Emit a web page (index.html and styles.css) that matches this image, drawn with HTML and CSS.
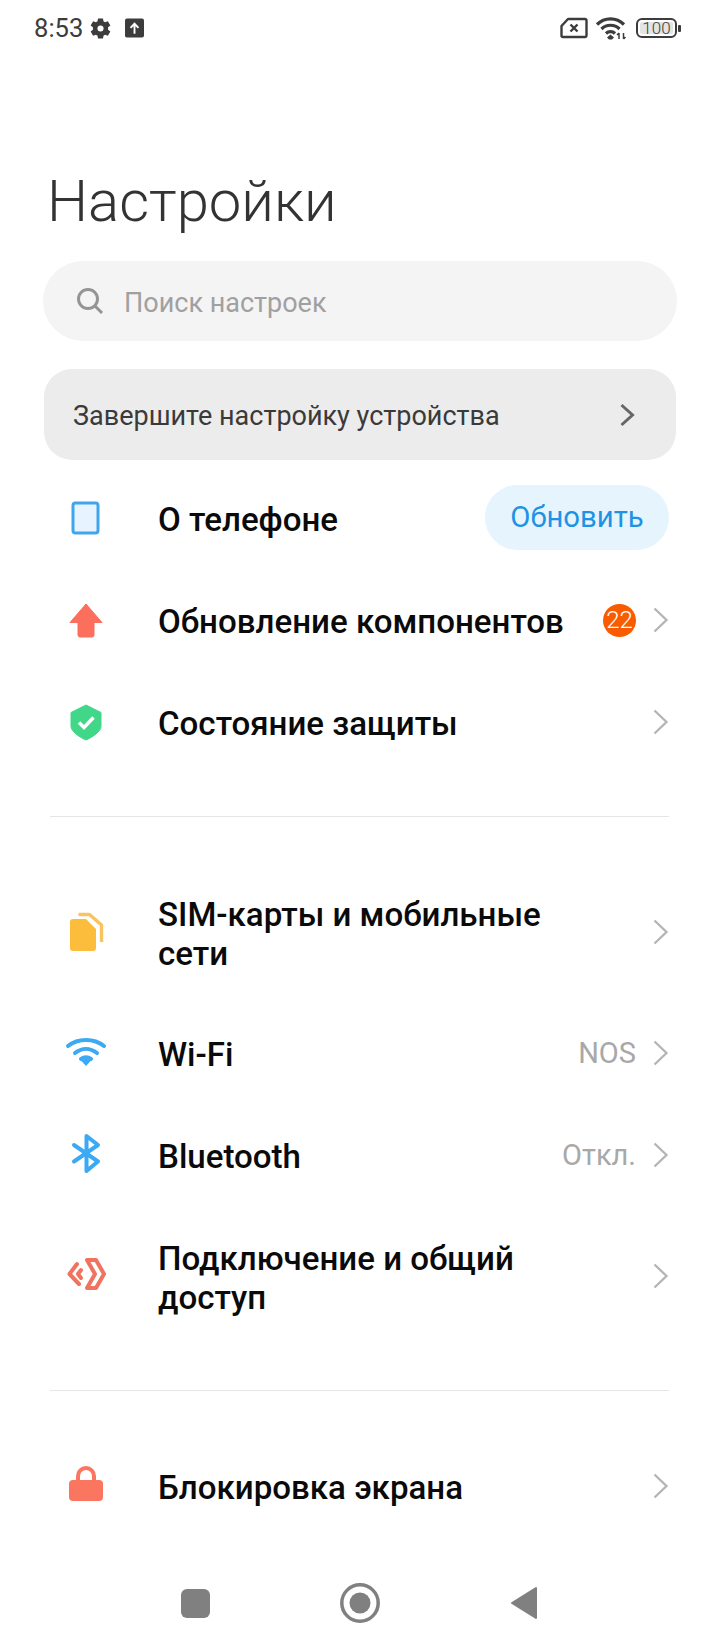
FILE: index.html
```html
<!DOCTYPE html>
<html lang="ru">
<head>
    <meta charset="UTF-8">
    <meta name="viewport" content="width=device-width, initial-scale=1.0">
    <title>Настройки</title>
    <link rel="stylesheet" href="styles.css">
</head>
<body>
    <div class="statusbar">
        <div class="status-left">
            <span class="clock">8:53</span>
            <svg class="gear" width="23" height="23" viewBox="0 0 24 24"><path fill="#3c3c3c" fill-rule="evenodd" d="M14.6 1.5l.5 3 1.7 1 2.9-1.1 2.6 4.5-2.4 1.9v2.4l2.4 1.9-2.6 4.5-2.9-1.1-1.7 1-.5 3H9.4l-.5-3-1.7-1-2.9 1.1-2.6-4.500 2.400-1.900V10.800L1.700 8.900l2.600-4.500 2.900 1.100 1.700-1 .5-3zM12 8.800a3.200 3.200 0 1 0 0 6.400 3.200 3.200 0 0 0 0-6.400z"/></svg>
            <svg class="upload" width="19" height="20" viewBox="0 0 20 20"><rect width="20" height="20" rx="2" fill="#3c3c3c"/><path d="M10 16V6M5.800 9.800L10 5.500l4.200 4.300" fill="none" stroke="#fff" stroke-width="2"/></svg>
        </div>
        <div class="status-right">
            <svg width="28" height="22" viewBox="0 0 28 22"><path d="M8 2h17a1.500 1.500 0 0 1 1.500 1.500v15A1.500 1.500 0 0 1 25 20H3a1.500 1.500 0 0 1-1.500-1.500V9z" fill="none" stroke="#3c3c3c" stroke-width="2.400" stroke-linejoin="round"/><path d="M10.500 7.500l7 7M17.500 7.500l-7 7" stroke="#3c3c3c" stroke-width="2.400"/></svg>
            <svg class="wifi-small" width="33" height="24" viewBox="0 0 32 24"><g fill="none" stroke="#3c3c3c" stroke-width="3.200"><path d="M1.500 8.500C9 1 21 1 28.500 8.500"/><path d="M6 13c5-5 13-5 18 0"/><path d="M10.500 17.500c2.500-2.500 6.500-2.500 9 0"/></g><path d="M15 18.500l3.500 3-2 2h-3l-2-2z" fill="#3c3c3c"/><path d="M23.500 23v-6M21.500 19l2-2M28 17v6M30 21l-2 2" stroke="#3c3c3c" stroke-width="1.500" fill="none"/></svg>
            <div class="battery"><span class="battery-level">100</span></div>
            <span class="battery-tip"></span>
        </div>
    </div>

    <h1 class="title">Настройки</h1>

    <div class="search">
        <svg width="28" height="28" viewBox="0 0 28 28"><circle cx="12" cy="12" r="9.500" fill="none" stroke="#949494" stroke-width="3"/><path d="M18.500 18.500l7.500 7.500" stroke="#949494" stroke-width="3"/></svg>
        <span>Поиск настроек</span>
    </div>

    <div class="setup">
        <span>Завершите настройку устройства</span>
        <svg width="16" height="24" viewBox="0 0 16 24"><path d="M2.500 2l11 10-11 10" fill="none" stroke="#666" stroke-width="3"/></svg>
    </div>

    <div class="list">
        <div class="row">
            <svg class="icon" width="44" height="44" viewBox="0 0 44 44"><rect x="9" y="7" width="25" height="30" rx="2.500" fill="#e7f4ff" stroke="#41a5ec" stroke-width="3"/></svg>
            <div class="name">О телефоне</div>
            <div class="update">Обновить</div>
        </div>
        <div class="row">
            <svg class="icon" width="44" height="44" viewBox="0 0 44 44"><path d="M22 6L38 24.500H30V37a2 2 0 0 1-2 2H16a2 2 0 0 1-2-2V24.500H6z" fill="#fb6f5c" stroke="#fb6f5c" stroke-linejoin="round"/></svg>
            <div class="name">Обновление компонентов</div>
            <span class="badge">22</span>
            <svg class="chev" width="18" height="28" viewBox="0 0 18 28"><path d="M3.500 2.500l12 11.500-12 11.500" /></svg>
        </div>
        <div class="row">
            <svg class="icon" width="44" height="44" viewBox="0 0 44 44"><path d="M22 5l15 7.500v14c0 5-9 11-15 13.500-6-2.500-15-8.500-15-13.500v-14z" fill="#41d788" stroke="#41d788" stroke-linejoin="round"/><path d="M15 22.500l5 5 9.500-10" fill="none" stroke="#fff" stroke-width="3.500"/></svg>
            <div class="name">Состояние защиты</div>
            <svg class="chev" width="18" height="28" viewBox="0 0 18 28"><path d="M3.500 2.500l12 11.500-12 11.500" /></svg>
        </div>
    </div>

    <div class="divider first-divider"></div>

    <div class="list second">
        <div class="row tall">
            <svg class="icon" width="44" height="44" viewBox="0 0 44 44"><path d="M9 9h13l10 10v19a3 3 0 0 1-3 3H9a3 3 0 0 1-3-3V12a3 3 0 0 1 3-3z" fill="#fdbd3c"/><path d="M14.500 4.500h11l12 10.500v17" fill="none" stroke="#f9c35e" stroke-width="3.400" stroke-linejoin="round"/></svg>
            <div class="name">SIM-карты и мобильные<br>сети</div>
            <svg class="chev" width="18" height="28" viewBox="0 0 18 28"><path d="M3.500 2.500l12 11.500-12 11.500" /></svg>
        </div>
        <div class="row">
            <svg class="icon" width="44" height="44" viewBox="0 0 44 44"><g fill="none" stroke="#3ba9f4" stroke-width="4" stroke-linecap="round"><path d="M4 15C14 7 30 7 40 15"/><path d="M11 22c7-5.500 15-5.500 22 0"/><path d="M17 28c3-2 7-2 10 0"/></g><path d="M22 35l-5-5.500c3-2 7-2 10 0z" fill="#3ba9f4"/></svg>
            <div class="name">Wi-Fi</div>
            <span class="value">NOS</span>
            <svg class="chev" width="18" height="28" viewBox="0 0 18 28"><path d="M3.500 2.500l12 11.500-12 11.500" /></svg>
        </div>
        <div class="row">
            <svg class="icon" width="44" height="44" viewBox="0 0 44 44"><path d="M10 12L34 28.500 22.500 38V3L34 12 10 28.500" fill="none" stroke="#3ba9f4" stroke-width="4" stroke-linejoin="round" stroke-linecap="round"/></svg>
            <div class="name">Bluetooth</div>
            <span class="value">Откл.</span>
            <svg class="chev" width="18" height="28" viewBox="0 0 18 28"><path d="M3.500 2.500l12 11.500-12 11.500" /></svg>
        </div>
        <div class="row tall">
            <svg class="icon" width="44" height="44" viewBox="0 0 44 44"><g fill="none" stroke="#f0735f" stroke-width="4" stroke-linejoin="round" stroke-linecap="round"><path d="M13 10L5.500 20 15 30"/><path d="M23 6h9l8 14-8 14h-9l8-14z"/><path d="M17 16l-3 4 3 4"/></g></svg>
            <div class="name">Подключение и общий<br>доступ</div>
            <svg class="chev" width="18" height="28" viewBox="0 0 18 28"><path d="M3.500 2.500l12 11.500-12 11.500" /></svg>
        </div>
    </div>

    <div class="divider second-divider"></div>

    <div class="list third">
        <div class="row">
            <svg class="icon" width="44" height="44" viewBox="0 0 44 44"><path d="M14 18v-6a8 8 0 0 1 16 0v6" fill="none" stroke="#fb7660" stroke-width="4"/><rect x="5" y="16" width="34" height="21" rx="4" fill="#fb7660"/></svg>
            <div class="name">Блокировка экрана</div>
            <svg class="chev" width="18" height="28" viewBox="0 0 18 28"><path d="M3.500 2.500l12 11.500-12 11.500" /></svg>
        </div>
    </div>

    <div class="navbar">
        <span class="nav-square"></span>
        <svg width="40" height="40" viewBox="0 0 40 40"><circle cx="20" cy="20" r="18.200" fill="none" stroke="#808080" stroke-width="3.500"/><circle cx="20" cy="20" r="10.500" fill="#808080"/></svg>
        <svg width="28" height="34" viewBox="0 0 28 34"><path d="M26 2v30L2 17z" fill="#808080" stroke="#808080" stroke-width="2" stroke-linejoin="round"/></svg>
    </div>
</body>
</html>
```

FILE: styles.css
```css
body {
    font-family: 'Roboto', 'Noto Sans', sans-serif;
    width: 720px;
    height: 1650px;
    margin: 0;
    background: #fff;
    position: relative;
    overflow: hidden;
}
.statusbar {
    display: flex;
    justify-content: space-between;
    align-items: center;
    height: 56px;
    padding: 0 39px 0 34px;
}
.status-left, .status-right {
    display: flex;
    align-items: center;
}
.clock {
    font-size: 25.600px;
    color: #3c3c3c;
}
.gear {
    margin-left: 6px;
}
.upload {
    margin-left: 13px;
}
.wifi-small {
    margin-left: 7px;
    margin-right: 8px;
}
.battery {
    box-sizing: border-box;
    width: 41px;
    height: 20px;
    border: 2px solid #3c3c3c;
    border-radius: 6px;
    padding: 2px;
    display: flex;
    align-items: center;
    justify-content: center;
}
.battery-level {
    font-size: 17px;
    font-weight: 300;
    line-height: 12px;
    width: 100%;
    text-align: center;
    color: #3c3c3c;
    background: #e4e4e4;
    border-radius: 2px;
}
.battery-tip {
    width: 3px;
    height: 7px;
    margin-left: 1px;
    background: #3c3c3c;
    border-radius: 1px;
}
.title {
    margin: 106px 0 0 47px;
    height: 99px;
    font-size: 58px;
    line-height: 78px;
    font-weight: 300;
    color: #333;
}
.search {
    display: flex;
    align-items: center;
    height: 80px;
    margin: 0 43px;
    padding-left: 33px;
    background: #f4f4f4;
    border-radius: 40px;
}
.search span {
    margin-left: 20px;
    padding-top: 3px;
    font-size: 27px;
    color: #a0a0a0;
}
.setup {
    display: flex;
    justify-content: space-between;
    align-items: center;
    height: 91px;
    margin: 28px 44px 0;
    padding: 0 41px 0 29px;
    background: #ececec;
    border-radius: 28px;
    font-size: 27px;
    color: #3a3a3a;
}
.setup span {
    padding-top: 2px;
}
.list {
    padding: 7px 0 0 0;
}
.row {
    display: flex;
    align-items: center;
    min-height: 102px;
    padding: 0 51px 0 64px;
}
.row.tall {
    min-height: 140px;
}
.icon {
    flex: none;
}
.name {
    flex: 1;
    margin-left: 50px;
    padding-top: 3px;
    font-size: 33.100px;
    line-height: 39px;
    font-weight: 500;
    color: #0a0a0a;
}
.update {
    width: 184px;
    height: 65px;
    margin-bottom: 2px;
    background: #e6f4fe;
    border-radius: 33px;
    text-align: center;
    font-size: 29.300px;
    line-height: 65px;
    color: #1e93e4;
}
.badge {
    width: 33px;
    height: 33px;
    margin-right: 15px;
    border-radius: 50%;
    background: #f95b00;
    color: #fff;
    text-align: center;
    font-size: 24px;
    font-weight: 300;
    line-height: 33px;
}
.value {
    margin-right: 15px;
    font-size: 29px;
    color: #a8a8a8;
}
.chev {
    flex: none;
}
.chev path {
    fill: none;
    stroke: #b4b4b4;
    stroke-width: 2.300;
}
.divider {
    height: 1px;
    margin: 0 51px 0 50px;
    background: #e6e6e6;
}
.first-divider {
    margin-top: 43px;
}
.second {
    padding-top: 45px;
}
.second-divider {
    margin-top: 44px;
}
.third {
    padding-top: 44px;
}
.navbar {
    position: absolute;
    left: 0;
    right: 0;
    bottom: 27px;
    display: flex;
    align-items: center;
    justify-content: space-between;
    padding: 0 182px 0 181px;
}
.nav-square {
    width: 29px;
    height: 29px;
    background: #808080;
    border-radius: 6px;
}
```
